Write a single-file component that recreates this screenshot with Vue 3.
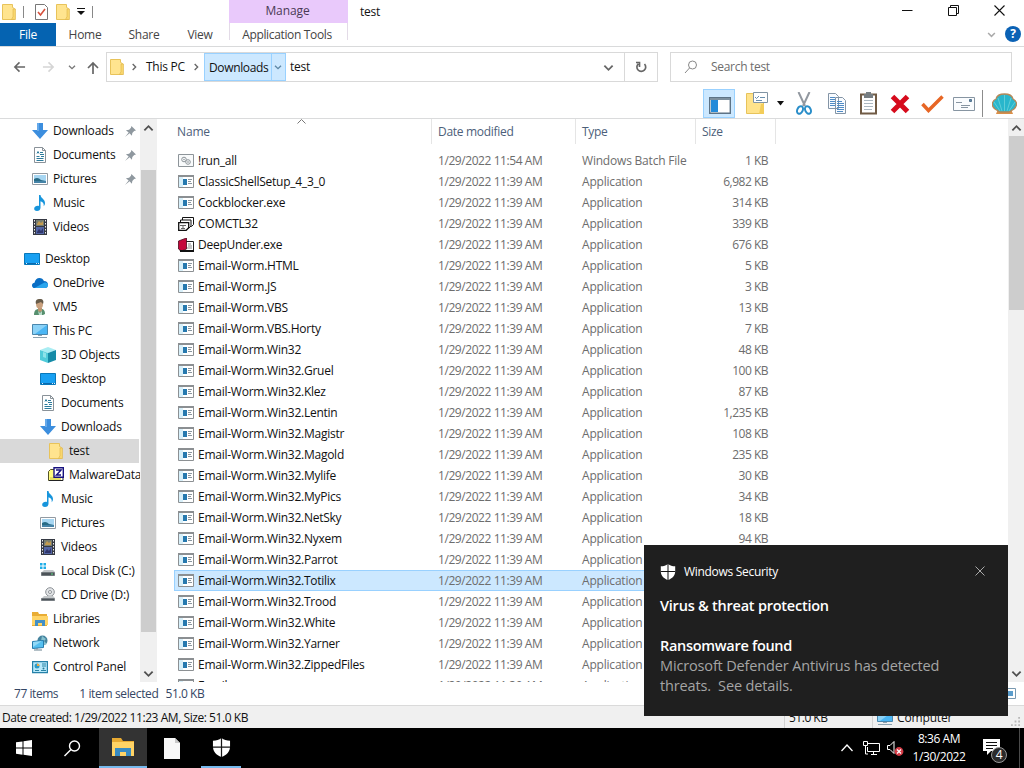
<template>
    <div class="screen">
        <svg class="sprites" aria-hidden="true">
            <symbol id="folder" viewBox="0 0 16 16">
                <path d="M1.5.5h10v3l2 1v11h-12z" fill="#ffe48f" stroke="#e8c35a" />
                <path d="M12 5h2.500v10.500H10.500l1.500-3z" fill="#f8d66d" stroke="#dfb64b" stroke-width=".6" />
            </symbol>
            <symbol id="down" viewBox="0 0 16 16">
                <path d="M5 0h6v7h5l-8 9-8-9h5z" fill="#3c8ede" />
                <path d="M5 0h2v8H5z" fill="#65a9ea" />
            </symbol>
            <symbol id="document" viewBox="0 0 16 16">
                <path d="M2.500.5h8l3 3v12h-11z" fill="#fff" stroke="#8a9299" />
                <path d="M10.500.5v3h3" fill="none" stroke="#8a9299" />
                <path d="M5 6.500l1-2 1 2M8 5.500h3M8 7.500h4M4.500 9.500h3M9 9.500h3M4.500 11.500h7M4.500 13.500h7" fill="none" stroke="#2c7b9c" />
            </symbol>
            <symbol id="picture" viewBox="0 0 16 16">
                <path d="M.5 2.500h15v11H.5z" fill="#fff" stroke="#929aa2" />
                <path d="M2 4h12v8H2z" fill="#a7d6f2" />
                <path d="M2 8c3-2 5-1 7 1l5 1v2H2z" fill="#286b86" />
                <path d="M2 10h12v2H2z" fill="#4583a7" />
            </symbol>
            <symbol id="music" viewBox="0 0 16 16">
                <path d="M7 0h1.500c.4 3.500 4.500 4 4.500 8 0 1.700-.8 2.700-1.300 3.200.4-2.800-.7-4.200-3.200-5v6.500c0 2-1.500 3.300-3.500 3.300S2 15 2.200 13.300C2.500 11.500 4.700 10.300 7 11z" fill="#1795dc" />
            </symbol>
            <symbol id="video" viewBox="0 0 16 16">
                <path d="M1 0h14v16H1z" fill="#353943" />
                <path d="M4 1h8v6H4z" fill="#777e72" />
                <path d="M4 8h8v7H4z" fill="#5366a5" />
                <path d="M5 5l2-3 2 2 2-2v4H5z" fill="#c39b4f" />
                <path d="M5 13l2-3 2 2 2-3v5H5z" fill="#30366c" />
                <path d="M2.500 1v15M13.500 1v15" stroke="#eee" stroke-dasharray="1.500 1.500" />
            </symbol>
            <symbol id="desktop" viewBox="0 0 16 16">
                <path d="M.5 2.500h15v11H.5z" fill="#18a0f2" stroke="#0878ba" />
                <path d="M1 12.500h14" stroke="#0a69ad" />
                <path d="M2 12.500h1M12 12.500h1M14 12.500h1" stroke="#d9f2ff" />
            </symbol>
            <symbol id="cloud" viewBox="0 0 16 16">
                <path d="M2.500 13C1 13 0 11.800 0 10.400 0 9 1.200 7.900 2.500 7.800 3 5 5 3 7.500 3c2 0 3.700 1.200 4.400 3C14.500 6 16 7.500 16 9.700 16 11.700 14.700 13 13 13z" fill="#0a6ec4" />
                <path d="M2.500 13 12 7.800c2-.8 4 .4 4 2.400 0 1.600-1.200 2.800-3 2.800z" fill="#2aa5ed" />
            </symbol>
            <symbol id="user" viewBox="0 0 16 16">
                <path d="M2 16c0-4 1.500-6 5-6h2c3 0 4 2 4 5l-2 1z" fill="#568f6e" />
                <path d="M6 9h4v3l-2 1-2-1z" fill="#bd9470" />
                <ellipse cx="7.500" cy="5" rx="3.500" ry="4.500" fill="#c9a17e" />
                <path d="M4 5C3 1 5 0 8 0s4 2 3 5L9 3z" fill="#675b49" />
                <path d="m6 12 2 2 2-2v4H7z" fill="#b9dac8" />
            </symbol>
            <symbol id="computer" viewBox="0 0 16 16">
                <path d="M.5 1.500h15v10H.5z" fill="#4bb6f4" stroke="#4a87ad" />
                <path d="M1 2h14L3 11H1z" fill="#8bd2f7" />
                <path d="M6 12.500h4M1 14.500h14" stroke="#8ca2b0" />
            </symbol>
            <symbol id="cube" viewBox="0 0 16 16">
                <path d="m0 3 8-3 8 3-8 3z" fill="#a9edf3" />
                <path d="m0 3 8 3v10l-8-3z" fill="#50cbd9" />
                <path d="m16 3-8 3v10l8-3z" fill="#158ba7" />
                <path d="M3 5l3 1v5l-3-1z" fill="#8de3e9" />
            </symbol>
            <symbol id="archive" viewBox="0 0 16 16">
                <path d="M.5 4.500l2-2h5v11h-7z" fill="#fffb7d" stroke="#555528" />
                <path d="M1 13.500h14v-4" fill="none" stroke="#222" />
                <path d="M2 10h11v3H2z" fill="#e6df61" />
                <path d="M6 .7h9.300v9.600H6z" fill="#fff" stroke="#17127f" stroke-width="1.400" />
                <path d="M8 3h5L8.500 8H13" fill="none" stroke="#17127f" stroke-width="1.500" />
            </symbol>
            <symbol id="disk" viewBox="0 0 16 16">
                <path d="M0 0h2.500v2.500H0zm3.500 0H6v2.500H3.500zM0 3.500h2.500V6H0zm3.500 0H6V6H3.500z" fill="#20aee8" />
                <path d="m2 9 2-2h9l2 2z" fill="#c2c6c9" />
                <path d="M1.500 9.500h13v3h-13z" fill="#4c5358" stroke="#72797d" />
                <path d="M11 11h2" stroke="#5fdf83" />
            </symbol>
            <symbol id="cd" viewBox="0 0 16 16">
                <circle cx="10" cy="5" r="4.300" fill="#e3e5e7" stroke="#8d9297" />
                <circle cx="10" cy="5" r="1.500" fill="#fff" stroke="#8d9297" />
                <path d="m2 11 2-2h9l2 2z" fill="#c4c8ca" />
                <path d="M1.500 11.500h13v2h-13z" fill="#4c5358" stroke="#777d82" />
            </symbol>
            <symbol id="library" viewBox="0 0 16 16">
                <path d="M0 1h6l1 2h8v12H0z" fill="#e9ad35" />
                <path d="M0 5h16v9H0z" fill="#ffd568" />
                <path d="M3 15V9h10v6h-3v-3H6v3z" fill="#428fc6" />
            </symbol>
            <symbol id="network" viewBox="0 0 16 16">
                <circle cx="10.500" cy="5.500" r="5" fill="#45839e" />
                <path d="M10 1l4 3-2 2 3 3-3 1-3-4z" fill="#86c1cf" />
                <path d="m.5 6.500 11-1v7l-11 1z" fill="#54bff0" stroke="#267bac" />
                <path d="M1 7l9-1-9 6z" fill="#92d9f7" />
                <path d="M5 13v1.500M2 15h8" stroke="#68818f" />
            </symbol>
            <symbol id="control" viewBox="0 0 16 16">
                <path d="M.6 2.600h14.800v11H.6z" fill="#b8e9fb" stroke="#2581a9" stroke-width="1.200" />
                <circle cx="5" cy="7" r="2.500" fill="#2d9bc7" />
                <path d="M5 4.500V7h2.500A2.500 2.500 0 0 0 5 4.500" fill="#f3a93e" />
                <path d="M10 5h4M10 7h4M3 11.500h4M9 11.500h5" stroke="#2782a4" />
                <circle cx="11.500" cy="9.500" r="1" fill="#287a98" />
            </symbol>
            <symbol id="program" viewBox="0 0 16 14">
                <path d="M.5.5h15v12H.5z" fill="#fff" stroke="#8c9093" />
                <path d="M0 1h16" stroke="#8b8f92" stroke-width="2" />
                <path d="M1 2h4v10H1z" fill="#d8f0fa" />
                <path d="M5 4h4v6H5z" fill="#2679af" />
                <path d="M10 4.500h4M10 6.500h3M10 8.500h4" stroke="#8a969e" />
            </symbol>
            <symbol id="batch" viewBox="0 0 16 14">
                <path d="M.5.5h15v12H.5z" fill="#f8fafb" stroke="#8d9499" />
                <circle cx="6" cy="5.500" r="2.300" fill="none" stroke="#8d9499" />
                <circle cx="10" cy="8" r="2.300" fill="#f8fafb" stroke="#8d9499" />
                <circle cx="6" cy="5.500" r=".7" fill="#7f868b" />
                <circle cx="10" cy="8" r=".8" fill="#7f868b" />
            </symbol>
            <symbol id="comctl" viewBox="0 0 16 14">
                <path d="M4.500.5h11v7l-2 2h-9z" fill="#fff" stroke="#111" />
                <path d="M2.500 3h10.500v6l-2 2H2.500z" fill="#fff" stroke="#111" />
                <path d="M.7 5.700h10v5l-2.500 2.600H.7z" fill="#fff" stroke="#111" stroke-width="1.300" />
                <path d="M2 8.500h6M5 8v3M3 11.500h4" stroke="#666" />
            </symbol>
            <symbol id="deep" viewBox="0 0 16 14">
                <path d="M5 3.500h10.500v9H2z" fill="#fff" stroke="#222" />
                <path d="M.5 3 8.500 0v11l-5 2-3-2z" fill="#c5083c" stroke="#4b071b" stroke-width=".8" />
                <path d="M10 6h3M10 8h4M9 10h5" stroke="#888" />
                <path d="M2 13h14" stroke="#111" stroke-width="2" />
            </symbol>
            <symbol id="shield" viewBox="0 0 20 20">
                <path d="M10 0c2.600 2 5.300 2.800 9 2.900V9c0 5.500-3.500 9-9 11-5.500-2-9-5.500-9-11V2.900C4.700 2.800 7.400 2 10 0z" fill="#fff" />
                <path d="M10 0v20M1 9.500h18" stroke="#171717" stroke-width="1.300" />
            </symbol>
            <symbol id="chevron" viewBox="0 0 12 12">
                <path d="m1.500 4 4.500 4.500L10.500 4" fill="none" stroke="currentColor" stroke-width="2" />
            </symbol>
            <symbol id="pin" viewBox="0 0 12 12">
                <path d="M7 0l5 5-2 .5-2 2-.5 3L5 8 0 12l4-5-3-2.500 3.500-.5 2-2z" fill="#8f989f" />
            </symbol>
        </svg>

        <header class="titlebar">
            <div class="quick">
                <svg class="q-folder"><use href="#folder" /></svg>
                <i class="q-line"></i>
                <svg class="q-check" viewBox="0 0 13 16">
                    <path d="M.5.500h9l3 3v12H.5z" fill="#fff" stroke="#777" />
                    <path d="m3 8 2.500 3L10 5" fill="none" stroke="#d6503c" stroke-width="1.600" />
                </svg>
                <svg class="q-folder second"><use href="#folder" /></svg>
                <svg class="q-more" viewBox="0 0 8 7"><path d="M0 .5h8" stroke="#111" /><path d="M0 3h8L4 7z" fill="#111" /></svg>
                <i class="q-line last"></i>
            </div>
            <div class="manage">Manage</div>
            <div class="title">test</div>
            <div class="window-buttons">
                <svg viewBox="0 0 11 11"><path d="M0 5.500h10.500" stroke="#111" /></svg>
                <svg viewBox="0 0 11 11"><path d="M.5 2.500h8v8h-8zM2.500 2.500v-2h8v8h-2" fill="none" stroke="#111" /></svg>
                <svg viewBox="0 0 11 11"><path d="m.5.5 10 10m0-10-10 10" fill="none" stroke="#111" stroke-width="1.100" /></svg>
            </div>
        </header>

        <nav class="ribbon">
            <span class="file-tab">File</span>
            <span class="tab home">Home</span>
            <span class="tab share">Share</span>
            <span class="tab view">View</span>
            <span class="tab tools">Application Tools</span>
            <svg class="ribbon-chevron"><use href="#chevron" /></svg>
            <span class="help">?</span>
        </nav>

        <div class="address-row">
            <svg class="arrow" viewBox="0 0 14 12"><path d="M13 6H2m5-5L2 6l5 5" /></svg>
            <svg class="arrow forward" viewBox="0 0 14 12"><path d="M1 6h11M7 1l5 5-5 5" /></svg>
            <svg class="recent"><use href="#chevron" /></svg>
            <svg class="arrow up" viewBox="0 0 12 13"><path d="M6 13V2M1 7l5-5 5 5" /></svg>
            <div class="address">
                <svg class="addr-folder"><use href="#folder" /></svg>
                <svg class="crumb-arrow"><use href="#chevron" /></svg>
                <span class="crumb pc">This PC</span>
                <svg class="crumb-arrow"><use href="#chevron" /></svg>
                <span class="crumb-active"><b>Downloads</b><svg><use href="#chevron" /></svg></span>
                <span class="crumb">test</span>
                <svg class="drop"><use href="#chevron" /></svg>
                <div class="refresh">
                    <svg viewBox="0 0 12 12"><path d="M9.500 3a4.400 4.400 0 1 1-6.200-.2M4.500 6V1.500H1" fill="none" stroke="#666" stroke-width="1.700" /></svg>
                </div>
            </div>
            <div class="search">
                <svg viewBox="0 0 14 14"><circle cx="8.500" cy="5" r="4" /><path d="M5.500 8 1 13" /></svg>
                <span>Search test</span>
            </div>
        </div>

        <div class="toolbar">
            <div class="pane-button">
                <svg width="22" height="17" viewBox="0 0 22 17"><path d="M.7.7h20.600v15.600H.7z" fill="#fff" stroke="#5d7386" stroke-width="1.400" /><path d="M1 1h20v2H1z" fill="#7e909e" /><path d="M2 3h7v12H2z" fill="#258bd9" /></svg>
            </div>
            <svg class="t-props" width="22" height="23" viewBox="0 0 22 23"><path d="M.5 1.500h13v3l4 3v14H.5z" fill="#ffe38b" stroke="#e7c35b" /><path d="M15 12h3v10h-5z" fill="#f3cd5a" /><path d="M7.500.5h14v10h-14z" fill="#fff" stroke="#8194a4" /><path d="m9 5 1.500 1.500L13 4M14 5.500h5M10 8.500h6" fill="none" stroke="#698fae" /></svg>
            <svg class="t-drop" width="7" height="5" viewBox="0 0 7 5"><path d="M0 0h7L3.500 4.500z" fill="#111" /></svg>
            <svg class="t-cut" width="16" height="23" viewBox="0 0 16 23"><path d="M2.500 0 9 14M13.500 0 7 14" stroke="#9298a0" stroke-width="2" /><ellipse cx="4" cy="18" rx="2.700" ry="4" transform="rotate(25 4 18)" fill="none" stroke="#288dc9" stroke-width="2" /><ellipse cx="12" cy="18" rx="2.700" ry="4" transform="rotate(-25 12 18)" fill="none" stroke="#288dc9" stroke-width="2" /></svg>
            <svg class="t-copy" width="18" height="21" viewBox="0 0 18 21"><path d="M.5.5h7l3 3v12H.5zM7.500 4.500h7l3 3v13h-10z" fill="#f8fbff" stroke="#8495a6" /><path d="M2 4.500h5M2 6.500h5M2 8.500h5M2 10.500h5M2 12.500h5M9 8.500h5M9 10.500h7M9 12.500h7M9 14.500h7M9 16.500h7M9 18.500h6" stroke="#4f8bc5" /></svg>
            <svg class="t-paste" width="17" height="23" viewBox="0 0 17 23"><path d="M1 2.500h15v19H1z" fill="#fff" stroke="#705b45" stroke-width="2" /><path d="M4 2h9v4H4zM6 0h5v3H6z" fill="#777e82" /><path d="M4 8.500h9M4 11.500h9M4 14.500h9M4 17.500h8" stroke="#acb8c1" /></svg>
            <svg class="t-delete" width="20" height="20" viewBox="0 0 20 20"><path d="m2.500 2.500 15 15m0-15-15 15" stroke="#d60b1c" stroke-width="5" /></svg>
            <svg class="t-check" width="23" height="18" viewBox="0 0 23 18"><path d="m1.500 9 6 6.500L21.500 1.500" fill="none" stroke="#e76625" stroke-width="3.500" /></svg>
            <svg class="t-rename" width="22" height="14" viewBox="0 0 22 14"><path d="M.5.5h21v13H.5z" fill="#fafcfe" stroke="#8795a2" /><path d="M3 5.500h6M8 8.500h9M8 10.500h7" stroke="#8795a2" /><path d="M16.500 2.500h2v2h-2z" fill="#6386a6" stroke="#537590" /></svg>
            <i class="t-line"></i>
            <svg class="t-shell" width="25" height="22" viewBox="0 0 25 22"><path d="M6 16h13l2 5H4z" fill="#d98f49" /><path d="M3 16C-2 12 1 7 4 6c1-4 5-5 8.500-5S20 2 21 6c4 2 5 6 1 10l-5 3H8z" fill="#29b6cc" stroke="#b4895a" stroke-width="1.300" /><path d="M12.500 18V2M10 18 6 5m9 13 4-13M8 18 2 9m15 9 6-9" stroke="#6fd3da" stroke-width=".8" /></svg>
        </div>

        <main class="content">
            <aside class="tree">
                <div v-for="(item, i) in tree" :key="i" class="tree-item" :class="['level-' + item.level, { gap: item.gap, current: item.current }]">
                    <svg class="icon"><use :href="'#' + item.icon" /></svg>
                    <span>{{ item.label }}</span>
                    <svg v-if="item.pinned" class="pin"><use href="#pin" /></svg>
                </div>
            </aside>
            <div class="scrollbar tree-scroll">
                <svg class="sc-up"><use href="#chevron" /></svg>
                <div class="thumb"></div>
                <svg><use href="#chevron" /></svg>
            </div>
            <section class="files">
                <div class="columns">
                    <span>Name</span><span>Date modified</span><span>Type</span><span>Size</span>
                    <svg class="sort" viewBox="0 0 9 5"><path d="m.5 4.500 4-4 4 4" fill="none" stroke="#777" /></svg>
                </div>
                <div v-for="(file, i) in files" :key="i" class="file-row" :class="{ selected: i === 20 }">
                    <svg class="file-icon"><use :href="'#' + (file[2] || 'program')" /></svg>
                    <span class="name">{{ file[0] }}</span>
                    <span class="date">1/29/2022 {{ i ? '11:39' : '11:54' }} AM</span>
                    <span class="type">{{ i ? 'Application' : 'Windows Batch File' }}</span>
                    <span class="size">{{ file[1] }} KB</span>
                </div>
            </section>
            <div class="scrollbar file-scroll">
                <svg class="sc-up"><use href="#chevron" /></svg>
                <div class="thumb"></div>
                <svg><use href="#chevron" /></svg>
            </div>
        </main>

        <div class="status">
            <span>77 items</span><span>1 item selected</span><span>51.0 KB</span>
            <svg viewBox="0 0 16 12"><path d="M.5.5h15v10H.5z" fill="#fff" stroke="#7999b1" /><path d="M2 3h11v5H2z" fill="#5b9dcc" /></svg>
        </div>
        <div class="classic-status">
            <span class="created">Date created: 1/29/2022 11:23 AM, Size: 51.0 KB</span>
            <span class="total">51.0 KB</span>
            <span class="zone"><svg><use href="#computer" /></svg>Computer</span>
            <svg class="grip" viewBox="0 0 10 10"><path d="M8 0h2v2H8zM4 4h2v2H4zm4 0h2v2H8zM0 8h2v2H0zm4 0h2v2H4zm4 0h2v2H8z" fill="#b8b8b8" /></svg>
        </div>

        <footer class="taskbar">
            <div class="task"><svg width="16" height="16" viewBox="0 0 16 16"><path d="m0 2.300 6.500-.9v6.100H0zM7.500 1.200 16 0v7.500H7.500zM0 8.500h6.500v6.200L0 13.800zM7.500 8.500H16V16l-8.500-1.200z" fill="#fff" /></svg></div>
            <div class="task"><svg width="17" height="17" viewBox="0 0 17 17"><circle cx="10.500" cy="6" r="5" fill="none" stroke="#fff" stroke-width="1.400" /><path d="m7 9.500-6.500 6.500" stroke="#fff" stroke-width="1.500" /></svg></div>
            <div class="task active"><svg width="22" height="19" viewBox="0 0 22 19"><path d="M0 0h9l2 3h11v15H0z" fill="#e8aa32" /><path d="M0 4h22v14H0z" fill="#ffd365" /><path d="M3 18v-8h16v8h-5v-4H8v4z" fill="#398bc2" /></svg></div>
            <div class="task"><svg width="17" height="21" viewBox="0 0 17 21"><path d="M1 0h11l5 5v16H1z" fill="#f8f8f8" /><path d="M12 0v5h5" fill="#c9c9c9" /></svg></div>
            <div class="task running"><svg width="19" height="19"><use href="#shield" /></svg></div>
            <div class="tray">
                <svg class="tray-up" width="12" height="8" viewBox="0 0 12 8"><path d="m.5 7 5.500-6 5.500 6" fill="none" stroke="#fff" stroke-width="1.300" /></svg>
                <svg class="tray-net" width="17" height="14" viewBox="0 0 17 14"><path d="M5 2.500h11.500v8H4.500V6M8 13.500h6M10.500 11v2M.5.5h4v4h-4zM2.500 5v8H5" fill="none" stroke="#fff" /></svg>
                <svg class="tray-sound" width="17" height="15" viewBox="0 0 17 15"><path d="M.5 4.500H3l4-4v12l-4-4H.5z" fill="none" stroke="#fff" /><circle cx="12" cy="10.500" r="4.400" fill="#d43b46" /><path d="m10 8.500 4 4m0-4-4 4" stroke="#fff" stroke-width="1.200" /></svg>
                <div class="clock"><span>8:36 AM</span><span>1/30/2022</span></div>
                <div class="action">
                    <svg width="17" height="17" viewBox="0 0 17 17"><path d="M0 0h17v12H8l-4 4v-4H0z" fill="#fff" /><path d="M3 3.500h11M3 6.500h11M3 9.500h7" stroke="#111" /></svg>
                    <span class="count">4</span>
                </div>
                <i class="show-desktop"></i>
            </div>
        </footer>

        <div class="toast">
            <div class="toast-app">
                <svg class="toast-shield"><use href="#shield" /></svg>
                <span>Windows Security</span>
                <svg class="toast-close" viewBox="0 0 10 10"><path d="m.5.5 9 9m0-9-9 9" stroke="#aaa" fill="none" /></svg>
            </div>
            <h2>Virus &amp; threat protection</h2>
            <h3>Ransomware found</h3>
            <p>Microsoft Defender Antivirus has detected<br>threats.&nbsp; See details.</p>
        </div>
    </div>
</template>

<script setup>
const tree = [
    { label: 'Downloads', icon: 'down', level: 1, pinned: true },
    { label: 'Documents', icon: 'document', level: 1, pinned: true },
    { label: 'Pictures', icon: 'picture', level: 1, pinned: true },
    { label: 'Music', icon: 'music', level: 1 },
    { label: 'Videos', icon: 'video', level: 1 },
    { label: 'Desktop', icon: 'desktop', level: 0, gap: true },
    { label: 'OneDrive', icon: 'cloud', level: 1 },
    { label: 'VM5', icon: 'user', level: 1 },
    { label: 'This PC', icon: 'computer', level: 1 },
    { label: '3D Objects', icon: 'cube', level: 2 },
    { label: 'Desktop', icon: 'desktop', level: 2 },
    { label: 'Documents', icon: 'document', level: 2 },
    { label: 'Downloads', icon: 'down', level: 2 },
    { label: 'test', icon: 'folder', level: 3, current: true },
    { label: 'MalwareData', icon: 'archive', level: 3 },
    { label: 'Music', icon: 'music', level: 2 },
    { label: 'Pictures', icon: 'picture', level: 2 },
    { label: 'Videos', icon: 'video', level: 2 },
    { label: 'Local Disk (C:)', icon: 'disk', level: 2 },
    { label: 'CD Drive (D:)', icon: 'cd', level: 2 },
    { label: 'Libraries', icon: 'library', level: 1 },
    { label: 'Network', icon: 'network', level: 1 },
    { label: 'Control Panel', icon: 'control', level: 1 },
];

// name, size in KB, icon
const files = [
    ['!run_all', '1', 'batch'],
    ['ClassicShellSetup_4_3_0', '6,982'],
    ['Cockblocker.exe', '314'],
    ['COMCTL32', '339', 'comctl'],
    ['DeepUnder.exe', '676', 'deep'],
    ['Email-Worm.HTML', '5'],
    ['Email-Worm.JS', '3'],
    ['Email-Worm.VBS', '13'],
    ['Email-Worm.VBS.Horty', '7'],
    ['Email-Worm.Win32', '48'],
    ['Email-Worm.Win32.Gruel', '100'],
    ['Email-Worm.Win32.Klez', '87'],
    ['Email-Worm.Win32.Lentin', '1,235'],
    ['Email-Worm.Win32.Magistr', '108'],
    ['Email-Worm.Win32.Magold', '235'],
    ['Email-Worm.Win32.Mylife', '30'],
    ['Email-Worm.Win32.MyPics', '34'],
    ['Email-Worm.Win32.NetSky', '18'],
    ['Email-Worm.Win32.Nyxem', '94'],
    ['Email-Worm.Win32.Parrot', '51'],
    ['Email-Worm.Win32.Totilix', '51'],
    ['Email-Worm.Win32.Trood', '51'],
    ['Email-Worm.Win32.White', '51'],
    ['Email-Worm.Win32.Yarner', '51'],
    ['Email-Worm.Win32.ZippedFiles', '51'],
    ['Email', '51'],
];
</script>

<style>
body {
    margin: 0;
    overflow: hidden;
}
</style>

<style scoped>
.screen {
    position: relative;
    width: 1024px;
    height: 768px;
    overflow: hidden;
    display: flex;
    flex-direction: column;
    background: #fff;
    color: #111;
    font: 12px/16px "Open Sans", "Noto Sans", sans-serif;
    letter-spacing: -0.25px;
    white-space: nowrap;
}

.screen * {
    box-sizing: border-box;
}

svg {
    flex-shrink: 0;
    display: block;
}

.sprites {
    position: absolute;
    width: 0;
    height: 0;
}

.titlebar {
    height: 23px;
    display: flex;
    flex-shrink: 0;
}

.quick {
    width: 229px;
    display: flex;
    align-items: center;
    padding-left: 1px;
}

.q-folder {
    width: 16px;
    height: 16px;
}

.q-line {
    width: 1px;
    height: 12px;
    background: #888;
    margin-left: 6px;
}

.q-check {
    width: 13px;
    height: 16px;
    margin-left: 11px;
}

.second {
    margin-left: 7px;
}

.q-more {
    width: 8px;
    height: 7px;
    margin-left: 6px;
}

.q-line.last {
    margin-left: 7px;
}

.manage {
    width: 119px;
    padding: 3px 2px 0 0;
    background: #e9c9fb;
    color: #4a3a55;
    text-align: center;
    letter-spacing: -0.1px;
}

.title {
    padding: 4px 0 0 12px;
}

.window-buttons {
    margin-left: auto;
    display: flex;
    gap: 35px;
    padding: 5px 19px 0 0;
}

.window-buttons svg {
    width: 11px;
    height: 11px;
}

.ribbon {
    height: 24px;
    flex-shrink: 0;
    display: flex;
    border-bottom: 1px solid #d9dadb;
    line-height: 24px;
    color: #444;
}

.file-tab {
    width: 56px;
    background: #0563b1;
    color: #fff;
    text-align: center;
}

.tab {
    width: 57px;
    text-align: center;
}

.share {
    width: 60px;
}

.view {
    width: 52px;
}

.home {
    width: 58px;
}

.tools {
    width: 119px;
    height: 17px;
    margin-left: 3px;
    border: solid #e3dbe7;
    border-width: 0 1px;
    padding-right: 3px;
    letter-spacing: -0.35px;
}

.ribbon-chevron {
    width: 9px;
    height: 9px;
    margin: 7px 0 0 639px;
    color: #aaa;
}

.help {
    width: 16px;
    height: 16px;
    margin: 3px 0 0 9px;
    border-radius: 50%;
    background: #0b62b5;
    color: #fff;
    font-weight: bold;
    line-height: 16px;
    text-align: center;
}

.address-row {
    height: 42px;
    flex-shrink: 0;
    display: flex;
    align-items: center;
    padding: 0 12px 2px 13px;
}

.arrow {
    width: 13px;
    height: 12px;
    fill: none;
    stroke: #666;
    stroke-width: 1.7;
}

.forward {
    margin-left: 16px;
    stroke: #d5d5d5;
}

.recent {
    width: 8px;
    height: 8px;
    margin-left: 13px;
    color: #777;
}

.up {
    width: 12px;
    height: 13px;
    margin-left: 11px;
}

.address {
    width: 552px;
    height: 30px;
    margin-left: 7px;
    display: flex;
    align-items: center;
    border: 1px solid #d9d9d9;
    padding-left: 2px;
}

.addr-folder {
    width: 16px;
    height: 16px;
}

.crumb-arrow {
    width: 8px;
    height: 8px;
    margin-left: 5px;
    color: #666;
    transform: rotate(-90deg);
}

.pc {
    width: 41px;
    margin-left: 8px;
}

.crumb-active {
    width: 82px;
    height: 28px;
    margin: 0 4px 0 4px;
    display: flex;
    align-items: center;
    border: 1px solid #99d1ff;
    background: #cce8ff;
}

.crumb-active b {
    width: 67px;
    height: 26px;
    padding: 6px 0 0 4px;
    border-right: 1px solid #99d1ff;
    font-weight: normal;
    letter-spacing: -0.35px;
}

.crumb-active svg {
    width: 8px;
    height: 8px;
    margin-left: 2px;
    color: #5d87a5;
}

.drop {
    width: 11px;
    height: 11px;
    margin-left: auto;
    color: #666;
}

.refresh {
    width: 33px;
    height: 28px;
    margin-left: 10px;
    border-left: 1px solid #d9d9d9;
    display: grid;
    place-items: center;
}

.refresh svg {
    width: 12px;
    height: 12px;
}

.search {
    width: 342px;
    height: 30px;
    margin-left: 12px;
    display: flex;
    align-items: center;
    border: 1px solid #d9d9d9;
    padding-left: 13px;
    color: #6d6d6d;
    letter-spacing: -0.3px;
}

.search svg {
    width: 14px;
    height: 14px;
    margin-right: 13px;
    fill: none;
    stroke: #888;
}

.toolbar {
    height: 30px;
    flex-shrink: 0;
    display: flex;
    align-items: center;
    border-bottom: 1px solid #dadbdc;
    padding-left: 703px;
}

.pane-button {
    width: 32px;
    height: 29px;
    display: grid;
    place-items: center;
    padding: 3px 0 0 2px;
    border: 1px solid #99d1ff;
    background: #cce8ff;
}

.t-props {
    margin-left: 11px;
}

.t-drop {
    margin-left: 9px;
}

.t-cut {
    margin-left: 12px;
}

.t-copy {
    margin-left: 16px;
}

.t-paste {
    margin-left: 14px;
}

.t-delete {
    margin-left: 13px;
}

.t-check {
    margin-left: 11px;
}

.t-rename {
    margin-left: 9px;
}

.t-line {
    width: 1px;
    height: 27px;
    margin-left: 7px;
    background: #8c8c8c;
}

.t-shell {
    margin-left: 9px;
}

.content {
    height: 563px;
    flex-shrink: 0;
    display: flex;
    overflow: hidden;
}

.tree {
    width: 140px;
    overflow: hidden;
}

.tree-item {
    width: 139px;
    height: 24px;
    display: flex;
    align-items: center;
    letter-spacing: -0.2px;
}

.gap {
    margin-top: 8px;
}

.level-0 {
    padding-left: 24px;
}

.level-1 {
    padding-left: 32px;
}

.level-2 {
    padding-left: 40px;
}

.level-3 {
    padding-left: 48px;
}

.current {
    background: #d9d9d9;
}

.icon {
    width: 16px;
    height: 16px;
    margin-right: 5px;
}

.pin {
    width: 11px;
    height: 11px;
    margin: 0 3px 0 auto;
}

.scrollbar {
    width: 16px;
    display: flex;
    flex-direction: column;
    align-items: center;
    background: #f0f0f0;
    color: #505050;
}

.scrollbar svg {
    width: 11px;
    height: 11px;
    margin-top: auto;
    margin-bottom: 3px;
}

.scrollbar .sc-up {
    margin: 4px 0 0;
    transform: rotate(180deg);
}

.thumb {
    width: 15px;
    background: #cdcdcd;
}

.tree-scroll {
    height: 563px;
}

.tree-scroll .thumb {
    height: 462px;
    margin-top: 36px;
}

.files {
    width: 852px;
    padding-left: 17px;
    border-left: 1px solid #f0f0f0;
    position: relative;
}

.columns {
    height: 25px;
    margin-bottom: 6px;
    display: flex;
    color: #4c607a;
    line-height: 26px;
}

.columns span {
    width: 144px;
    border-right: 1px solid #e5e5e5;
    padding-left: 6px;
    letter-spacing: -0.3px;
}

.columns span:first-child {
    width: 258px;
    padding-left: 3px;
    letter-spacing: -0.15px;
}

.columns span:nth-child(3) {
    width: 120px;
}

.columns span:nth-child(4) {
    width: 80px;
}

.sort {
    position: absolute;
    left: 140px;
    top: 0;
    width: 9px;
    height: 5px;
}

.file-row {
    width: 602px;
    height: 21px;
    display: flex;
    align-items: center;
    padding-left: 4px;
    color: #6d6d6d;
}

.file-row span {
    padding-top: 1px;
}

.selected {
    background: #cce8ff;
    box-shadow: inset 0 0 0 1px #99d1ff;
}

.file-icon {
    width: 16px;
    height: 14px;
    margin-right: 4px;
}

.name {
    width: 240px;
    color: #111;
}

.date {
    width: 144px;
    letter-spacing: -0.43px;
}

.type {
    width: 114px;
    letter-spacing: -0.2px;
}

.size {
    width: 72px;
    text-align: right;
    letter-spacing: -0.5px;
}

.file-scroll .thumb {
    height: 174px;
    margin-top: 2px;
}

.status {
    height: 23px;
    flex-shrink: 0;
    display: flex;
    align-items: center;
    padding: 0 8px 0 14px;
    color: #354664;
    letter-spacing: -0.45px;
}

.status span:nth-child(2) {
    margin: 0 7px 0 21px;
    letter-spacing: -0.35px;
}

.status svg {
    width: 16px;
    height: 12px;
    margin-left: auto;
}

.classic-status {
    height: 23px;
    flex-shrink: 0;
    display: flex;
    align-items: center;
    border-top: 1px solid #dadada;
    background: #f0f0f0;
    padding-left: 2px;
}

.created {
    width: 782px;
    padding-top: 1px;
    letter-spacing: -0.44px;
}

.total {
    width: 88px;
    height: 22px;
    line-height: 24px;
    border-left: 1px solid #d2d2d2;
    padding-left: 4px;
    letter-spacing: -0.5px;
}

.zone {
    height: 22px;
    width: 139px;
    display: flex;
    align-items: center;
    border-left: 1px solid #d2d2d2;
    padding: 2px 0 0 4px;
    letter-spacing: -0.15px;
}

.zone svg {
    width: 16px;
    height: 16px;
    margin-right: 4px;
}

.grip {
    width: 9px;
    height: 9px;
    margin-top: 9px;
}

.taskbar {
    height: 40px;
    flex-shrink: 0;
    display: flex;
    background: #000;
    color: #fff;
}

.task {
    width: 48px;
    height: 40px;
    display: grid;
    place-items: center;
}

.active {
    margin-left: 3px;
    background: #333;
    border-bottom: 2px solid #76b9ed;
}

.task.running {
    width: 40px;
    margin-left: 6px;
    border-bottom: 2px solid #76b9ed;
}

.tray {
    margin-left: auto;
    display: flex;
    align-items: center;
    width: 183px;
}

.tray-net {
    margin-left: 10px;
}

.tray-sound {
    margin-left: 7px;
}

.clock {
    width: 64px;
    margin-left: 3px;
    text-align: center;
    line-height: 18px;
    letter-spacing: -0.45px;
}

.clock span {
    display: block;
}

.action {
    position: relative;
    margin: 0 0 1px 12px;
}

.count {
    position: absolute;
    left: 8px;
    top: 8px;
    width: 16px;
    height: 16px;
    border: 1px solid #999;
    border-radius: 50%;
    background: #2b2b2b;
    line-height: 14px;
    text-align: center;
}

.show-desktop {
    width: 1px;
    height: 40px;
    margin: 0 4px 0 auto;
    background: #4a4a4a;
}

.toast {
    position: absolute;
    left: 644px;
    top: 545px;
    width: 364px;
    height: 171px;
    padding: 17px 23px 0 16px;
    background: #1f1f1f;
    color: #fff;
}

.toast-app {
    height: 20px;
    display: flex;
    align-items: center;
    letter-spacing: -0.3px;
}

.toast-shield {
    width: 16px;
    height: 16px;
    margin-right: 8px;
}

.toast-close {
    width: 10px;
    height: 10px;
    margin: -2px 0 0 auto;
}

.toast h2,
.toast h3 {
    margin: 14px 0 20px;
    font-size: 14.5px;
    font-weight: 600;
    line-height: 20px;
    letter-spacing: -0.23px;
}

.toast h3 {
    margin: 0;
    letter-spacing: -0.3px;
}

.toast p {
    margin: 0;
    color: #a5a5a5;
    font-size: 14.5px;
    line-height: 20px;
    letter-spacing: -0.15px;
}
</style>
